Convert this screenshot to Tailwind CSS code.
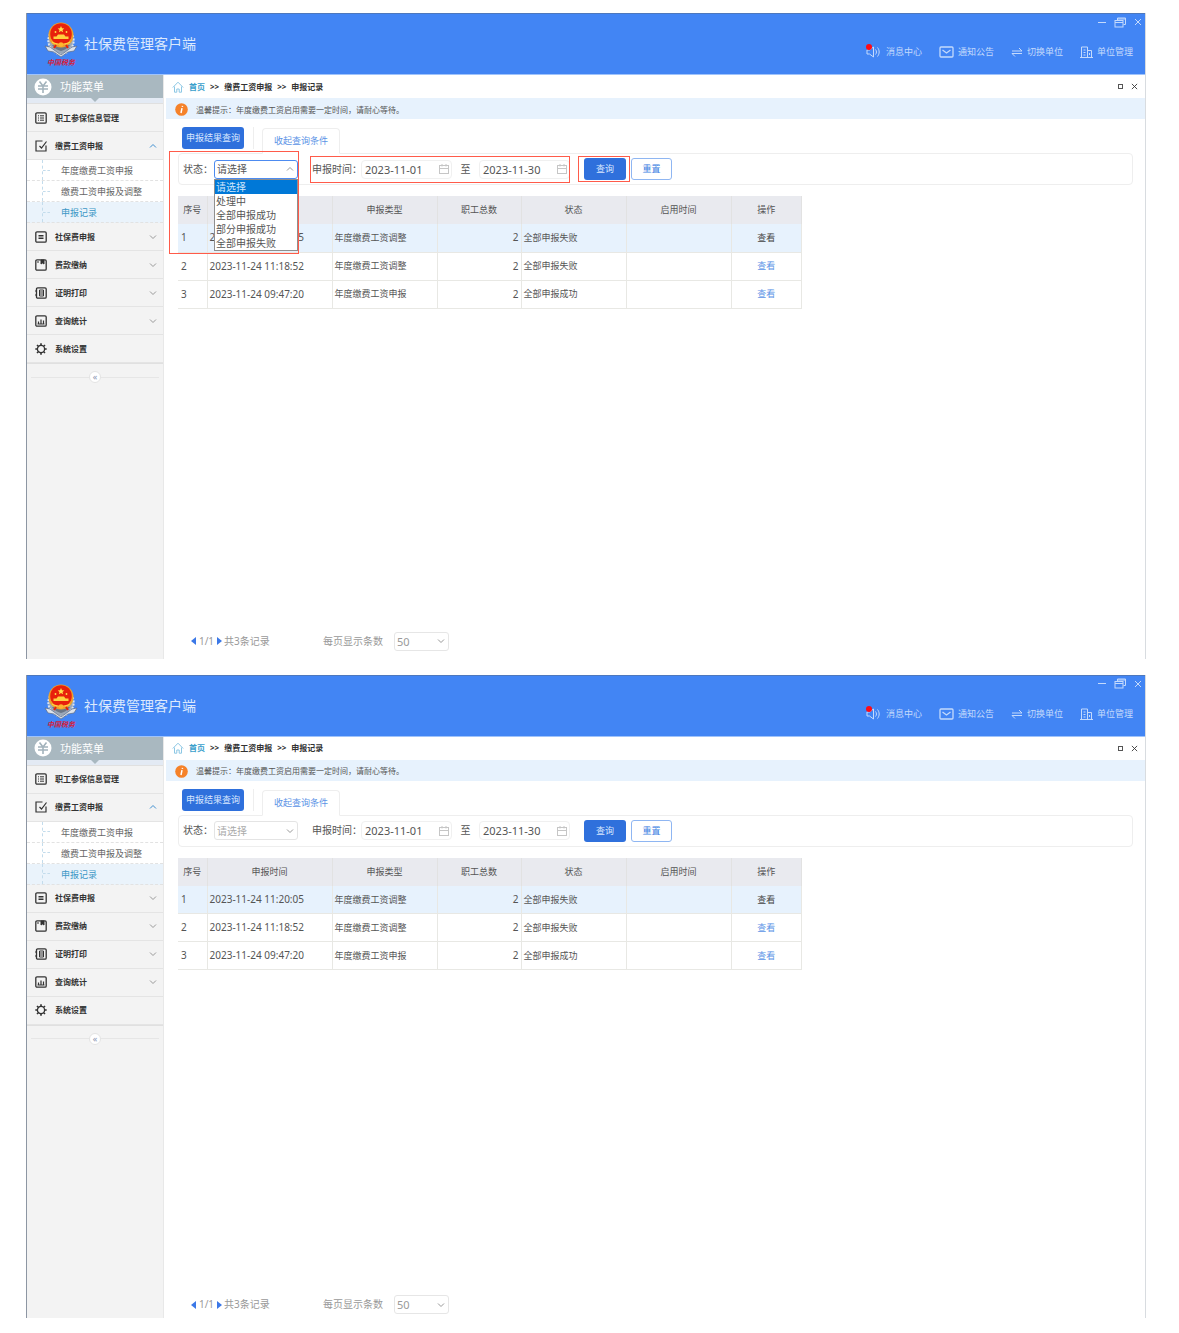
<!DOCTYPE html>
<html lang="zh-CN">
<head>
    <meta charset="UTF-8">
    <meta name="viewport" content="width=device-width, initial-scale=1.0">
    <title>社保费管理客户端</title>
    <script src="https://cdn.jsdelivr.net/npm/@tailwindcss/browser@4"></script>
</head>
<body class="bg-white font-['Noto_Sans','Noto_Sans_CJK_SC',sans-serif] text-[#555]">
    <!-- Icons -->
    <svg class="hidden" xmlns="http://www.w3.org/2000/svg">
        <symbol id="i-logo" viewBox="0 0 34 36">
            <path d="M6 12C2 20 5 29 17 33C29 29 32 20 28 12" fill="#9aa7b8" stroke="#dfe5ec" stroke-width="2" stroke-dasharray="2 1.200"/>
            <path d="M1 24l5 1 11 8 11-8 5-1-3 5-6 1-7 5-7-5-6-1z" fill="#dde3ea" stroke="#5b6a86" stroke-width=".7"/>
            <path d="M8 23c3 4 6 5 9 6 3-1 6-2 9-6z" fill="#6b7686"/>
            <circle cx="17" cy="13" r="12.500" fill="#eea02c"/>
            <circle cx="17" cy="12" r="10.800" fill="#e8200c"/>
            <path d="M17 4l1 2.200 2.300.2-1.800 1.500.6 2.300-2.100-1.300-2.100 1.300.6-2.300-1.800-1.500 2.300-.2z" fill="#ffe14a"/>
            <circle cx="11.500" cy="10" r=".9" fill="#ffe14a"/><circle cx="22.500" cy="10" r=".9" fill="#ffe14a"/>
            <path d="M9.500 17h15v-2.500h-3l-1.500-2h-6l-1.500 2h-3z" fill="#ffcf3f"/>
            <path d="M8 20c4 3 14 3 18 0" stroke="#ffcf3f" stroke-width="1.500" fill="none"/>
            <circle cx="17" cy="22.500" r="2.300" fill="#ffb52e"/>
            <path d="M12 23l-2 3M22 23l2 3" stroke="#e8200c" stroke-width="2"/>
        </symbol>
        <symbol id="i-sound" viewBox="0 0 14 14" fill="none" stroke="currentColor">
            <path d="M1 5h2.500L7.500 2v10L3.500 9H1z"/><path d="M9.500 4.500c1.300 1.500 1.300 3.500 0 5M11.500 2.500c2.200 2.800 2.200 6.200 0 9"/>
        </symbol>
        <symbol id="i-mail" viewBox="0 0 15 12" fill="none" stroke="currentColor" stroke-width="1.300">
            <rect x="1" y="1" width="13" height="10" rx="1"/><path d="M3.500 4l4 3 4-3"/>
        </symbol>
        <symbol id="i-swap" viewBox="0 0 12 12" fill="none" stroke="currentColor">
            <path d="M1 5h10L8 2M11 7.500H1l3 3"/>
        </symbol>
        <symbol id="i-building" viewBox="0 0 13 12" fill="none" stroke="currentColor">
            <path d="M1.500 11V1h6v10M7.500 4.500h4V11M0 11.500h13M3.500 4h2M3.500 6.500h2M3.500 9h2M9.500 7v2"/>
        </symbol>
        <symbol id="i-restore" viewBox="0 0 12 11" fill="none" stroke="currentColor">
            <path d="M3.500 3V1h8v6.500h-2"/><rect x="1" y="3.500" width="8" height="6.500"/><path d="M1 5.500h8M3.500 2h8"/>
        </symbol>
        <symbol id="i-close" viewBox="0 0 8 8" fill="none" stroke="currentColor"><path d="M1 1l6 6M7 1l-6 6"/></symbol>
        <symbol id="i-yen" viewBox="0 0 18 18">
            <circle cx="9" cy="9" r="8.500" fill="#fff"/>
            <path d="M5.500 3.500L9 8l3.500-4.500M4 8h10M4 11h10M9 8v7" stroke="#a3b3bc" stroke-width="1.600" fill="none"/>
        </symbol>
        <symbol id="i-home" viewBox="0 0 12 12" fill="none" stroke="#8cc7e4">
            <path d="M.8 6.500L6 1.200l5.200 5.300M2.500 5.500v5.700h2.300V8h2.400v3.200h2.300V5.500"/>
        </symbol>
        <symbol id="i-info" viewBox="0 0 13 13">
            <circle cx="6.500" cy="6.500" r="6.300" fill="#f5822a"/>
            <path d="M7 5.200L6 10M7.500 2.800l-.2 1" stroke="#fff" stroke-width="1.500" fill="none"/>
        </symbol>
        <symbol id="i-list" viewBox="0 0 12 12" fill="none" stroke="currentColor">
            <rect x=".8" y=".8" width="10.400" height="10.400" rx="1.200" stroke-width="1.300"/>
            <path d="M3 3.800h1M5 3.800h4M3 6h1M5 6h4M3 8.200h1M5 8.200h4"/>
        </symbol>
        <symbol id="i-edit" viewBox="0 0 12 12" fill="none" stroke="currentColor" stroke-width="1.200">
            <path d="M7.500 1H1v10h10V5.500"/><path d="M4.500 6l2 2L11.500 1.500"/>
        </symbol>
        <symbol id="i-card" viewBox="0 0 12 12" fill="none" stroke="currentColor">
            <rect x=".8" y=".8" width="10.400" height="10.400" rx="1.200" stroke-width="1.300"/>
            <path d="M3.500 4.500h5M3.500 6h5M3.500 7.500h5"/>
        </symbol>
        <symbol id="i-note" viewBox="0 0 12 12" fill="none" stroke="currentColor">
            <rect x=".8" y=".8" width="10.400" height="10.400" rx="1.200" stroke-width="1.300"/>
            <path d="M6 1h3v4L7.500 4 6 5z" fill="currentColor"/><path d="M3 2v2"/>
        </symbol>
        <symbol id="i-print" viewBox="0 0 12 12" fill="none" stroke="currentColor">
            <rect x="1.500" y=".8" width="9.700" height="10.400" rx="1.200" stroke-width="1.300"/>
            <path d="M0 4h2M0 8h2M4.500 3h4v6h-4zM4.500 5h4M4.500 7h4"/>
        </symbol>
        <symbol id="i-chart" viewBox="0 0 12 12" fill="none" stroke="currentColor">
            <rect x=".8" y=".8" width="10.400" height="10.400" rx="1.200" stroke-width="1.300"/>
            <path d="M3.500 9V6.500M6 9V4.500M8.500 9V5.500M2.500 9h7" stroke-width="1.200"/>
        </symbol>
        <symbol id="i-gear" viewBox="0 0 12 12" fill="none" stroke="currentColor">
            <circle cx="6" cy="6" r="3.600" stroke-width="1.300"/>
            <path d="M6 .3v2M6 9.700v2M.3 6h2M9.700 6h2M2 2l1.300 1.300M8.700 8.700L10 10M10 2L8.700 3.300M3.300 8.700L2 10" stroke-width="1.600"/>
        </symbol>
        <symbol id="i-down" viewBox="0 0 8 6" fill="none" stroke="currentColor"><path d="M1 1.500l3 3 3-3"/></symbol>
        <symbol id="i-up" viewBox="0 0 8 6" fill="none" stroke="currentColor"><path d="M1 4.500l3-3 3 3"/></symbol>
        <symbol id="i-calendar" viewBox="0 0 10 10" fill="none" stroke="#c6c6c6">
            <rect x=".5" y="1.500" width="9" height="8"/><path d="M3 0v2.500M7 0v2.500M.5 4.500h9" />
        </symbol>
    </svg>

    <div id="windows" class="flex flex-col gap-4 pl-[26px] pr-[33px] pt-[13px] pb-3"></div>

    <script>
        const icon = (name, cls) => `<svg class="${cls}" aria-hidden="true"><use href="#i-${name}"/></svg>`;

        const menu = [
            { icon: 'list', text: '职工参保信息管理' },
            { icon: 'edit', text: '缴费工资申报', open: true, items: ['年度缴费工资申报', '缴费工资申报及调整', '申报记录'] },
            { icon: 'card', text: '社保费申报', arrow: true },
            { icon: 'note', text: '费款缴纳', arrow: true },
            { icon: 'print', text: '证明打印', arrow: true },
            { icon: 'chart', text: '查询统计', arrow: true },
            { icon: 'gear', text: '系统设置' }
        ];

        const records = [
            ['2023-11-24 11:20:05', '年度缴费工资调整', '全部申报失败'],
            ['2023-11-24 11:18:52', '年度缴费工资调整', '全部申报失败'],
            ['2023-11-24 09:47:20', '年度缴费工资申报', '全部申报成功']
        ];

        const states = ['请选择', '处理中', '全部申报成功', '部分申报成功', '全部申报失败'];

        function menuItem(m) {
            let arrow = '';
            if (m.open) arrow = icon('up', 'w-2 h-1.5 text-[#3f8fd0]');
            if (m.arrow) arrow = icon('down', 'w-2 h-1.5 text-[#999]');
            let html = `<li>
                <button class="flex items-center w-full h-7 pl-2 pr-1.5 border-b border-[#e4e4e4] text-[8px] font-bold text-[#333]">
                    ${icon(m.icon, 'w-3 h-3 mr-2')}<span class="flex-1 text-left">${m.text}</span>${arrow}
                </button>`;
            if (m.items) {
                html += `<ul class="bg-white text-[9px]">` + m.items.map((t, i) => `
                    <li class="flex h-[21px] border-b border-dashed border-[#e2e2e2] ${i === 2 ? 'bg-[#eaf3fb]' : ''}">
                        <span class="w-2 ml-[15px] border-l border-dashed border-[#c3dcec] flex items-center"><i class="w-2 border-t border-dashed border-[#c3dcec]"></i></span>
                        <a href="#" class="pl-[11px] leading-[21px] ${i === 2 ? 'text-[#3c97c6]' : 'text-[#666]'}">${t}</a>
                    </li>`).join('') + `</ul>`;
            }
            return html + `</li>`;
        }

        function dateInput(id, label, value) {
            return `<span class="relative flex items-center">
                <input id="${id}" aria-label="${label}" type="text" value="${value}" class="w-[91px] h-[19px] px-[3px] border border-[#f0f0f0] rounded-sm text-[11px] text-[#555]">
                ${icon('calendar', 'absolute right-[3px] w-2.5 h-2.5')}
            </span>`;
        }

        function renderWindow(n, open) {
            const mark = (cls) => open ? `<span class="absolute z-30 border border-[#ff5b4a] pointer-events-none ${cls}"></span>` : '';

            return `
            <div class="flex flex-col border-l border-r border-l-[#8d96a3] border-r-[#d8dce0]">
                <header class="flex justify-between h-[62px] bg-[#4285f4] border-t border-t-[#4d78bd] border-b border-b-[#9fc3fb] text-white">
                    <div class="flex items-start">
                        <div class="flex flex-col items-center w-9 ml-4 mt-2">
                            ${icon('logo', 'w-[34px] h-9')}
                            <span class="text-[7px] leading-[10px] font-bold italic text-[#d5203c] whitespace-nowrap">中国税务</span>
                        </div>
                        <h1 class="ml-[5px] mt-5 text-[14px] leading-5 text-[#dce9fd]">社保费管理客户端</h1>
                    </div>
                    <div class="flex flex-col items-end text-[#c4dafc]">
                        <div class="flex items-center gap-2 h-4 pr-[3px]">
                            <button aria-label="最小化" class="w-2 border-t border-current"></button>
                            <button aria-label="还原">${icon('restore', 'w-3 h-[11px]')}</button>
                            <button aria-label="关闭">${icon('close', 'w-2 h-2')}</button>
                        </div>
                        <nav class="flex items-center gap-[17px] mt-3 pr-3 text-[9px] leading-5">
                            <a href="#" class="relative flex items-center gap-1.5">${icon('sound', 'w-3.5 h-3.5')}<i class="absolute left-0 top-0.5 w-1.5 h-1.5 rounded-full bg-[#ff0a16]"></i>消息中心</a>
                            <a href="#" class="flex items-center gap-1">${icon('mail', 'w-[15px] h-3')}通知公告</a>
                            <a href="#" class="flex items-center gap-1">${icon('swap', 'w-3 h-3')}切换单位</a>
                            <a href="#" class="flex items-center gap-1">${icon('building', 'w-[13px] h-3')}单位管理</a>
                        </nav>
                    </div>
                </header>

                <div class="flex">
                    <!-- Sidebar -->
                    <aside class="w-[137px] shrink-0 bg-[#f3f3f3] border-r border-[#e8e8e8]">
                        <div class="h-7 bg-[#e3eaf4]">
                            <h2 class="relative flex items-center gap-2 h-[23px] pl-[7px] bg-[#a9b8c0] text-[11px] leading-[23px] font-normal text-white">
                                ${icon('yen', 'w-[18px] h-[18px]')}功能菜单
                                <i class="absolute left-16 top-full border-x-4 border-t-4 border-x-transparent border-t-[#a9b8c0]"></i>
                            </h2>
                        </div>
                        <ul class="border-t border-b border-[#e0e0e0]">${menu.map(menuItem).join('')}</ul>
                        <div class="flex items-center h-[26px] px-1">
                            <i class="flex-1 border-t border-[#e6e6e6]"></i>
                            <button aria-label="收起菜单" class="w-3 h-3 rounded-full bg-white border border-[#e4e4e4] text-[9px] leading-[8px] text-[#8a94b0]">«</button>
                            <i class="flex-1 border-t border-[#e6e6e6]"></i>
                        </div>
                    </aside>

                    <!-- Content -->
                    <main class="flex-1 min-w-0 pl-0.5">
                        <div class="flex items-center justify-between h-[23px] pl-1.5 pr-[7px] text-[8px] font-bold text-[#333]">
                            <nav class="flex items-center gap-[5px]">
                                ${icon('home', 'w-3 h-3')}<a href="#" class="text-[#3aa0cc]">首页</a><span>&gt;&gt;</span><span>缴费工资申报</span><span>&gt;&gt;</span><span>申报记录</span>
                            </nav>
                            <div class="flex items-center gap-2">
                                <button aria-label="最大化" class="w-[5px] h-[5px] border border-[#555]"></button>
                                <button aria-label="关闭页面">${icon('close', 'w-[7px] h-[7px]')}</button>
                            </div>
                        </div>
                        <p class="flex items-center gap-2 h-[21px] pl-[9px] pt-0.5 bg-[#e7f2fd] text-[8px]">
                            ${icon('info', 'w-[13px] h-[13px]')}温馨提示：年度缴费工资启用需要一定时间，请耐心等待。
                        </p>

                        <section class="relative px-3">
                            <div class="flex items-end pl-1 pt-2 text-[9px]">
                                <button class="w-[62px] h-[22px] mb-1 rounded-[3px] bg-[#2f70dc] text-[#d9e7ff]">申报结果查询</button>
                                <i class="h-[22px] mb-1 ml-[9px] border-l border-[#eee]"></i>
                                <button class="relative z-10 w-[78px] h-[26px] ml-2 -mb-px border border-b-white border-[#eee] rounded-t-sm bg-white text-[#5b93e6]">收起查询条件</button>
                            </div>

                            <form class="flex items-center h-8 pl-1 border border-[#eee] rounded-sm text-[10px]">
                                <label for="state-${n}" class="w-[31px] whitespace-nowrap">状态：</label>
                                <div class="relative flex items-center">
                                    <select id="state-${n}" class="w-[84px] h-[19px] pl-0.5 appearance-none border rounded-[3px] bg-white text-[10px] leading-none ${open ? 'border-[#4d8bf0] text-[#555]' : 'border-[#e4e4e4] text-[#aaa]'}">
                                        ${states.map(s => `<option>${s}</option>`).join('')}
                                    </select>
                                    ${icon(open ? 'up' : 'down', 'absolute right-1 w-2 h-1.5 text-[#999] pointer-events-none')}
                                    ${open ? `<ul class="absolute z-20 left-0 top-full w-[84px] border border-[#8f8f8f] bg-white leading-[14px] text-[#555]">
                                        ${states.map((s, i) => `<li class="pl-px ${i === 0 ? 'bg-[#0078d7] text-[#cfe6fb]' : ''}">${s}</li>`).join('')}
                                    </ul>` : ''}
                                </div>
                                <div class="relative flex items-center ml-3.5">
                                    <label for="from-${n}" class="w-[49px] whitespace-nowrap">申报时间：</label>
                                    ${dateInput(`from-${n}`, '申报时间起', '2023-11-01')}
                                    <span class="w-[27px] text-center">至</span>
                                    ${dateInput(`to-${n}`, '申报时间止', '2023-11-30')}
                                    ${mark('-left-0.5 right-0 -inset-y-1')}
                                </div>
                                <div class="relative flex ml-3.5">
                                    <button type="button" class="w-[42px] h-[22px] rounded-[3px] bg-[#2f70dc] text-[9px] text-[#d9e7ff]">查询</button>
                                    ${mark('-left-1.5 -right-1 -inset-y-0.5')}
                                </div>
                                <button type="button" class="w-[41px] h-[22px] ml-[5px] rounded-[3px] border border-[#8fb6f2] text-[9px] text-[#3d7fe2]">重置</button>
                            </form>
                            ${mark('left-[3px] top-8 w-[130px] h-[103px]')}

                            <table class="w-[624px] mt-[11px] table-fixed border-collapse text-[9px]">
                                <thead>
                                    <tr class="h-7 bg-[#e9eaef]">
                                        <th class="w-[29px] border-r border-[#e2e2e2] font-normal">序号</th>
                                        <th class="w-[125px] border-r border-[#e2e2e2] font-normal">${open ? '' : '申报时间'}</th>
                                        <th class="w-[105px] border-r border-[#e2e2e2] font-normal">申报类型</th>
                                        <th class="w-[84px] border-r border-[#e2e2e2] font-normal">职工总数</th>
                                        <th class="w-[105px] border-r border-[#e2e2e2] font-normal">状态</th>
                                        <th class="w-[105px] border-r border-[#e2e2e2] font-normal">启用时间</th>
                                        <th class="border-r border-[#e2e2e2] font-normal">操作</th>
                                    </tr>
                                </thead>
                                <tbody>
                                    ${records.map((r, i) => `
                                    <tr class="h-7 ${i === 0 ? 'bg-[#e7f2fd]' : ''}">
                                        <td class="border-r border-b border-[#e8e8e4] pl-[3px] text-[10px]">${i + 1}</td>
                                        <td class="border-r border-b border-[#e8e8e4] pl-0.5 text-[10px] whitespace-nowrap">${r[0]}</td>
                                        <td class="border-r border-b border-[#e8e8e4] pl-0.5">${r[1]}</td>
                                        <td class="border-r border-b border-[#e8e8e4] pr-0.5 text-right text-[10px]">2</td>
                                        <td class="border-r border-b border-[#e8e8e4] pl-0.5">${r[2]}</td>
                                        <td class="border-r border-b border-[#e8e8e4]"></td>
                                        <td class="border-r border-b border-[#e8e8e4] text-center"><a href="#" class="${i === 0 ? 'text-[#444]' : 'text-[#5b93e6]'}">查看</a></td>
                                    </tr>`).join('')}
                                </tbody>
                            </table>
                        </section>

                        <!-- Pager -->
                        <footer class="flex items-center pl-[25px] text-[10px] text-[#999] ${open ? 'mt-[323px] pb-2' : 'mt-[325px] pb-1'}">
                            <button aria-label="上一页" class="border-y-4 border-r-[5px] border-y-transparent border-r-[#3b78e7]"></button>
                            <span class="w-[21px] text-center">1/1</span>
                            <button aria-label="下一页" class="border-y-4 border-l-[5px] border-y-transparent border-l-[#3b78e7]"></button>
                            <span class="w-[101px] pl-0.5">共3条记录</span>
                            <label for="size-${n}" class="w-[71px]">每页显示条数</label>
                            <span class="relative flex items-center">
                                <select id="size-${n}" class="w-[55px] h-[19px] pl-0.5 appearance-none border border-[#e6e6e6] rounded-[3px] bg-white text-[11px] leading-none"><option>50</option></select>
                                ${icon('down', 'absolute right-1 w-2 h-1.5 pointer-events-none')}
                            </span>
                        </footer>
                    </main>
                </div>
            </div>`;
        }

        document.getElementById('windows').innerHTML = renderWindow(1, true) + renderWindow(2, false);
    </script>
</body>
</html>
